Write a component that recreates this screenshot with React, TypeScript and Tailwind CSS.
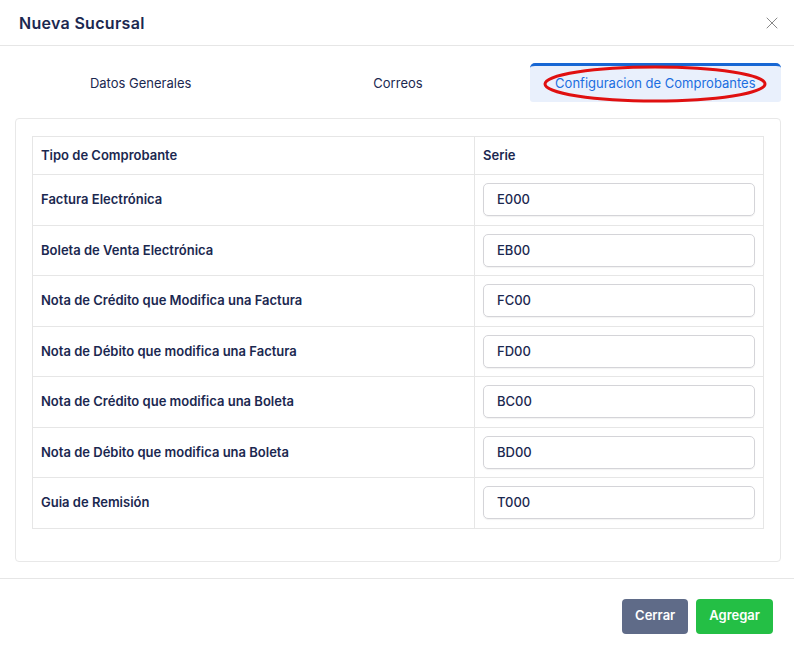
import { X } from 'lucide-react'

const rows = [
  { label: 'Factura Electrónica', serie: 'E000' },
  { label: 'Boleta de Venta Electrónica', serie: 'EB00' },
  { label: 'Nota de Crédito que Modifica una Factura', serie: 'FC00' },
  { label: 'Nota de Débito que modifica una Factura', serie: 'FD00' },
  { label: 'Nota de Crédito que modifica una Boleta', serie: 'BC00' },
  { label: 'Nota de Débito que modifica una Boleta', serie: 'BD00' },
  { label: 'Guia de Remisión', serie: 'T000' },
]

export default function App() {
  return (
    <div
      className="w-[794px] h-[647px] bg-white text-[#1b2850] flex flex-col"
      style={{ fontFamily: 'Inter, "Noto Sans", sans-serif' }}
    >
      {/* Header */}
      <div className="h-[46px] flex items-center justify-between pl-[19px] pr-[12px] border-b border-[#e6e6e6]">
        <h1 className="text-[16px] font-semibold tracking-[0.3px]">Nueva Sucursal</h1>
        <X className="w-[20px] h-[20px] text-[#888]" strokeWidth={1.2} />
      </div>

      {/* Tabs */}
      <div className="pl-[15px] pr-[13px] pt-[17px]">
        <div className="grid grid-cols-3 h-[39px] gap-[6px]">
          <div className="flex items-center justify-center pt-[3px] text-[13px]">Datos Generales</div>
          <div className="flex items-center justify-center pt-[3px] text-[13px]">Correos</div>
          <div className="relative flex items-center justify-center text-[13px] text-[#1b6ee0] bg-[#e9f0fc] border-t-[3px] border-[#1767d4] rounded-t-[5px] rounded-b-[3px]">
            Configuracion de Comprobantes
            <svg className="absolute left-[12px] top-[-3px]" width="226" height="40" viewBox="0 0 226 40">
              <ellipse cx="113" cy="21" rx="110" ry="17" fill="none" stroke="#e01010" strokeWidth="3" />
            </svg>
          </div>
        </div>
      </div>

      {/* Card */}
      <div className="ml-[15px] mr-[13px] mt-[16px] border border-[#e8e8e8] rounded-[4px] px-[16px] pt-[17px] pb-[32px]">
        <table className="w-full border-collapse text-[13px]">
          <thead>
            <tr className="h-[38px]">
              <th className="border border-[#e6e6e6] text-left font-semibold px-[8px] w-[442px]">Tipo de Comprobante</th>
              <th className="border border-[#e6e6e6] text-left font-semibold px-[8px]">Serie</th>
            </tr>
          </thead>
          <tbody>
            {rows.map((r) => (
              <tr key={r.label} className="h-[50.5px]">
                <td className="border border-[#e6e6e6] font-semibold px-[8px]">{r.label}</td>
                <td className="border border-[#e6e6e6] px-[8px]">
                  <div className="h-[33px] border border-[#d4d4d8] rounded-[5px] flex items-center px-[13px] text-[13px] font-medium shadow-[0_1px_1px_rgba(0,0,0,0.05)]">
                    {r.serie}
                  </div>
                </td>
              </tr>
            ))}
          </tbody>
        </table>
      </div>

      {/* Footer */}
      <div className="mt-[16px] border-t border-[#e6e6e6] flex justify-end gap-[8px] px-[21px] pt-[20px]">
        <button className="h-[35px] px-[13px] rounded-[4px] bg-[#5f6b88] text-white text-[13px] font-semibold">
          Cerrar
        </button>
        <button className="h-[35px] px-[13px] rounded-[4px] bg-[#24bf45] text-white text-[13px] font-semibold">
          Agregar
        </button>
      </div>
    </div>
  )
}
